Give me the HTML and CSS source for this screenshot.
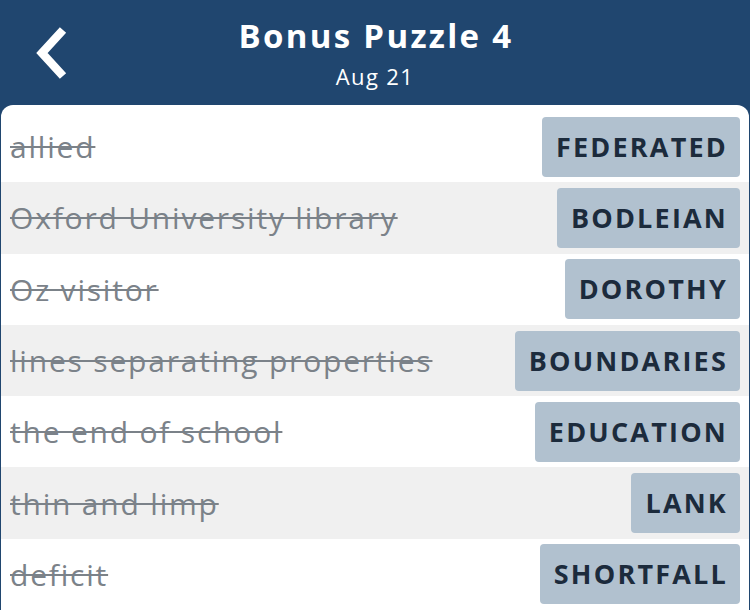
FILE: index.html
```html
<!DOCTYPE html>
<html lang="en">
<head>
<meta charset="utf-8">
<title>Bonus Puzzle 4</title>
<link rel="stylesheet" href="styles.css">
</head>
<body>
<div class="app">
  <header class="topbar">
    <button class="back" aria-label="Back">
      <svg width="40" height="56" viewBox="0 0 40 56"><path d="M30 5 L9 28 L30 51" fill="none" stroke="#fff" stroke-width="8.5" stroke-linecap="butt" stroke-linejoin="miter"/></svg>
    </button>
    <div class="titles">
      <h1 class="title">Bonus Puzzle 4</h1>
      <div class="subtitle">Aug 21</div>
    </div>
  </header>
  <main class="card">
    <div class="row"><span class="clue">allied</span><span class="answer">FEDERATED</span></div>
    <div class="row alt"><span class="clue">Oxford University library</span><span class="answer">BODLEIAN</span></div>
    <div class="row"><span class="clue">Oz visitor</span><span class="answer">DOROTHY</span></div>
    <div class="row alt"><span class="clue">lines separating properties</span><span class="answer">BOUNDARIES</span></div>
    <div class="row"><span class="clue">the end of school</span><span class="answer">EDUCATION</span></div>
    <div class="row alt"><span class="clue">thin and limp</span><span class="answer">LANK</span></div>
    <div class="row"><span class="clue">deficit</span><span class="answer">SHORTFALL</span></div>
  </main>
</div>
</body>
</html>
```
FILE: styles.css
```css
* { box-sizing: border-box; }
html, body { margin: 0; padding: 0; }
body {
  background: #20466f;
  font-family: "Open Sans", "Noto Sans", sans-serif;
  width: 750px;
  height: 610px;
  overflow: hidden;
}
.app { display: flex; flex-direction: column; height: 610px; }
.topbar {
  height: 105px;
  flex: none;
  display: flex;
  align-items: center;
  justify-content: center;
  position: relative;
  color: #fff;
}
.back {
  position: absolute;
  left: 33px;
  top: 25px;
  background: none;
  border: 0;
  padding: 0;
  width: 40px;
  height: 56px;
}
.back svg { display: block; }
.titles { text-align: center; margin-top: 0; }
.title {
  margin: 0;
  font-size: 33px;
  font-weight: 700;
  line-height: 40px;
  letter-spacing: 2.3px;
  padding-left: 2px;
}
.subtitle {
  font-size: 22px;
  line-height: 28px;
  margin-top: 6px;
  letter-spacing: 1.4px;
}
.card {
  flex: 1;
  background: #fff;
  margin: 0 1px;
  border-radius: 12px 12px 0 0;
  padding-top: 6px;
  overflow: hidden;
}
.row {
  height: 71.3px;
  display: flex;
  align-items: center;
  justify-content: space-between;
  padding: 0 9px 0 9px;
}
.row.alt { background: #f0f0f0; }
.clue {
  font-size: 30px;
  color: #7b8289;
  text-decoration: line-through;
  text-decoration-color: #7b8289;
  text-decoration-thickness: 2px;
  letter-spacing: 1.8px;
}
.answer {
  background: #b1c1cf;
  color: #1c2b3c;
  font-weight: 700;
  font-size: 27px;
  height: 60px;
  line-height: 60px;
  padding: 0 12px 0 14px;
  border-radius: 4px;
  letter-spacing: 2.2px;
}
```
